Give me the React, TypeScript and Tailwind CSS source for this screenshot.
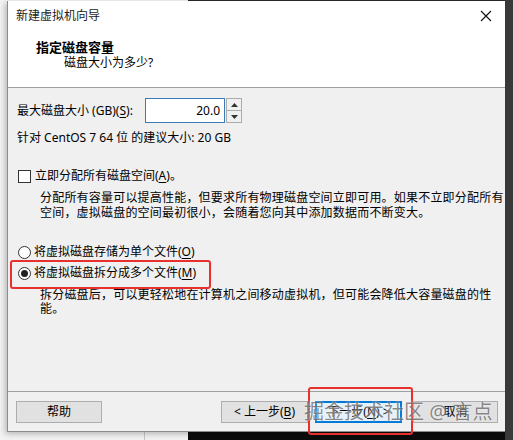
import React from 'react';

const font = { fontFamily: '"Noto Sans", "Noto Sans CJK SC", sans-serif' };

function Key({ k }: { k: string }) {
  return <span className="underline underline-offset-2">{k}</span>;
}

function Button({ children, primary = false, className = '' }: { children: React.ReactNode; primary?: boolean; className?: string }) {
  return (
    <div
      className={`flex h-[22px] items-center justify-center text-[12px] text-black ${
        primary ? 'border-2 border-[#0078d7] bg-[#e5f1fb]' : 'border border-[#adadad] bg-[#e1e1e1]'
      } ${className}`}
    >
      {children}
    </div>
  );
}

export default function App() {
  return (
    <div className="relative h-[440px] w-[513px] overflow-hidden" style={font}>
      {/* desktop behind the dialog */}
      <div className="flex h-full w-full">
        <div className="flex w-[188px] flex-col bg-[#f3f3f3]">
          <div className="flex-1" />
          <div className="ml-[144px] h-[8px] w-px bg-[#c8c8c8]" />
        </div>
        <div className="flex-1 border-t border-[#2a2a2a] bg-[#0c0c0c]" />
        <div className="w-[8px] bg-[#3a3a3a]" />
      </div>

      {/* dialog window */}
      <div className="absolute left-[7px] top-[1px] flex h-[431px] w-[498px] flex-col border-b border-l border-[#8c8c8c] bg-white shadow-[-2px_2px_6px_rgba(0,0,0,0.25)]">
        <div className="flex h-[30px] items-center justify-between pl-[8px] pr-[12px] text-[12px] text-[#1a1a1a]">
          <span>新建虚拟机向导</span>
          <svg width="12" height="12" viewBox="0 0 12 12" className="mr-[1px]">
            <path d="M1 1 L11 11 M11 1 L1 11" stroke="#111" strokeWidth="1.1" />
          </svg>
        </div>
        <div className="h-[56px] pt-[8px]">
          <div className="pl-[28px] text-[13px] font-bold leading-[16px] text-black">指定磁盘容量</div>
          <div className="pl-[56px] text-[12px] leading-[16px] text-black">磁盘大小为多少?</div>
        </div>
        <div className="h-px bg-[#a0a0a0]" />

        <div className="flex flex-1 flex-col bg-[#f0f0f0] pl-[9px] pt-[10px] text-[12px] text-black">
          <div className="flex h-[25px] items-center">
            <span className="w-[128px]">
              最大磁盘大小 (GB)(<Key k="S" />):
            </span>
            <div className="flex h-[25px] w-[80px] items-center justify-end border border-[#3d7ab8] bg-white pr-[4px] text-[12px]">
              20.0
            </div>
            <div className="ml-[1px] flex h-[25px] w-[16px] flex-col border border-[#acacac] bg-[#f0f0f0]">
              <div className="flex flex-1 items-center justify-center border-b border-[#acacac]">
                <svg width="7" height="4" viewBox="0 0 7 4">
                  <path d="M0 4 L3.5 0 L7 4 Z" fill="#333" />
                </svg>
              </div>
              <div className="flex flex-1 items-center justify-center">
                <svg width="7" height="4" viewBox="0 0 7 4">
                  <path d="M0 0 L3.5 4 L7 0 Z" fill="#333" />
                </svg>
              </div>
            </div>
          </div>
          <div className="mt-[7px] leading-[16px]">针对 CentOS 7 64 位 的建议大小: 20 GB</div>

          <div className="mt-[22px] flex h-[16px] items-center">
            <div className="ml-[1px] h-[13px] w-[13px] border border-[#333] bg-white" />
            <span className="ml-[4px]">
              立即分配所有磁盘空间(<Key k="A" />)。
            </span>
          </div>
          <div className="ml-[23px] mt-[6px] whitespace-nowrap leading-[15px] tracking-[0.2px]">
            <div>分配所有容量可以提高性能，但要求所有物理磁盘空间立即可用。如果不立即分配所有</div>
            <div>空间，虚拟磁盘的空间最初很小，会随着您向其中添加数据而不断变大。</div>
          </div>

          <div className="mt-[24px] flex h-[16px] items-center">
            <div className="ml-[1px] h-[13px] w-[13px] rounded-full border border-[#333] bg-white" />
            <span className="ml-[3px]">
              将虚拟磁盘存储为单个文件(<Key k="O" />)
            </span>
          </div>
          <div className="mt-[5px] flex h-[16px] items-center">
            <div className="ml-[1px] flex h-[13px] w-[13px] items-center justify-center rounded-full border border-[#333] bg-white">
              <div className="h-[7px] w-[7px] rounded-full bg-[#222]" />
            </div>
            <span className="ml-[3px]">
              将虚拟磁盘拆分成多个文件(<Key k="M" />)
            </span>
          </div>
          <div className="ml-[23px] mt-[7px] whitespace-nowrap leading-[14px] tracking-[0.2px]">
            <div>拆分磁盘后，可以更轻松地在计算机之间移动虚拟机，但可能会降低大容量磁盘的性</div>
            <div>能。</div>
          </div>
        </div>

        <div className="h-px bg-[#a0a0a0]" />
        <div className="flex h-[39px] items-start bg-[#f0f0f0] pl-[8px] pr-[7px] pt-[9px]">
          <Button className="w-[86px]">帮助</Button>
          <div className="flex-1" />
          <Button className="w-[87px]">
            &lt; 上一步(<Key k="B" />)
          </Button>
          <Button primary className="ml-[7px] w-[87px]">
            下一步(<Key k="N" />) &gt;
          </Button>
          <Button className="ml-[11px] w-[85px]">取消</Button>
        </div>
      </div>

      {/* annotations */}
      <div className="absolute left-[10px] top-[260px] h-[29px] w-[201px] rounded-[3px] border-2 border-[#e8312f]" />
      <div className="absolute left-[308px] top-[387px] h-[48px] w-[105px] rounded-[3px] border-2 border-[#e8312f]" />
      <div
        className="pointer-events-none absolute left-[304px] top-[400px] whitespace-nowrap text-[20px] leading-[24px] text-[rgba(60,60,60,0.6)]"
        style={{ textShadow: '0 0 2px rgba(255,255,255,0.9)' }}
      >
        掘金技术社区 @ 言点
      </div>
    </div>
  );
}
